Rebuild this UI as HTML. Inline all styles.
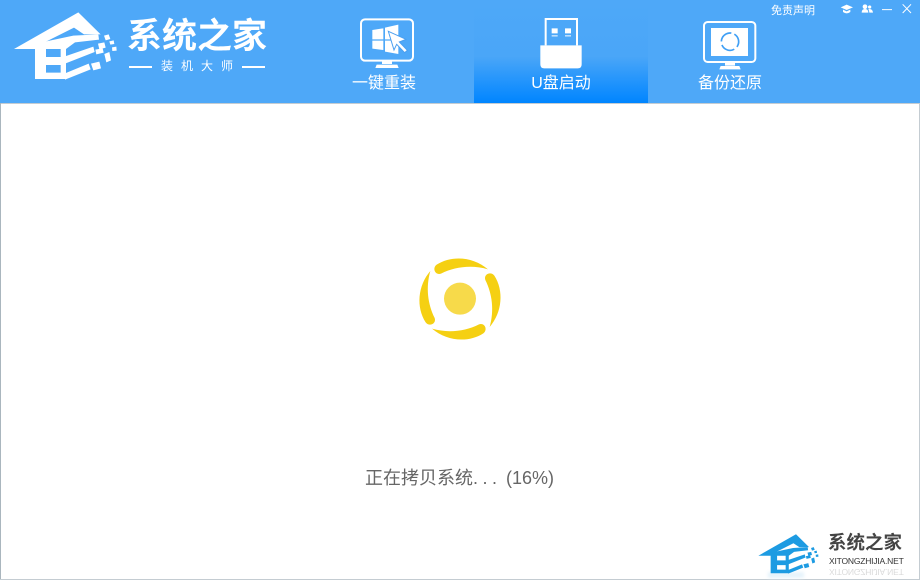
<!DOCTYPE html>
<html><head><meta charset="utf-8">
<style>
html,body{margin:0;padding:0;background:#fff}
#p{position:relative;width:920px;height:580px;overflow:hidden;background:#fff;font-family:"Liberation Sans","Noto Sans CJK SC",sans-serif}
.a{position:absolute;white-space:nowrap}
#hd{left:0;top:0;width:920px;height:103px;background:#4ea8f8}
#tab{left:474px;top:0;width:174px;height:103px;background:linear-gradient(#4ea8f8 0,#4aa6f8 55%,#0085ff 100%)}
.t{color:#fff;font-size:16px;line-height:20px;top:74px;text-align:center;width:174px}
svg{position:absolute;overflow:visible}
</style></head><body><div id="p">
<div class="a" id="hd"></div><div class="a" id="tab"></div>
<div class="a" style="left:0;top:103px;width:920px;height:1px;background:#c4ccd2"></div>
<div class="a" style="left:0;top:103px;width:1px;height:477px;background:#aab6be"></div>
<div class="a" style="right:0;top:103px;width:1px;height:477px;background:#c4ccd2"></div>
<div class="a" style="left:0;top:579px;width:920px;height:1px;background:#c4ccd2"></div>

<svg style="left:10px;top:5px" width="110" height="80" viewBox="0 0 330 240">
<g fill="#fff">
<path d="M12 132L205 22 272 88 222 88 192 68 108 110 105 132Z"/>
<path d="M75 125L105 110 190 92 265 88 267 104 195 112 168 132 168 222 75 222Z"/>
<path d="M165 154L250 125 254 141 165 176ZM165 205L236 176 242 193 165 224Z"/>
<path d="M282 92L296 88 301 102 287 106ZM298 109L311 106 313 117 301 119ZM306 127L319 125 320 137 307 138ZM264 116L283 112 287 128 268 133ZM256 134L278 130 281 143 259 148ZM283 147L298 141 303 166 289 172ZM243 176L268 170 273 190 250 196Z"/>
</g>
<path fill="#4ea8f8" d="M108 132H152V156H108ZM108 180H152V203H108Z"/>
</svg>
<div class="a" style="left:127px;top:13px;font-size:35px;line-height:48px;font-weight:700;color:#fff;letter-spacing:0">系统之家</div>
<div class="a" style="left:129px;top:66px;width:23px;height:2px;background:#fff"></div>
<div class="a" style="left:242px;top:66px;width:23px;height:2px;background:#fff"></div>
<div class="a" style="left:161px;top:58px;font-size:12px;line-height:17px;color:#fff;letter-spacing:8px">装机大师</div>

<svg style="left:330px;top:0" width="320" height="105" viewBox="0 0 960 315">
<rect x="93" y="58" width="156" height="124" rx="12" fill="none" stroke="#fff" stroke-width="6"/>
<path fill="#fff" d="M127 90L160 85V118H127ZM165 83L205 74V118H165ZM127 122H160V150L127 146ZM165 122H205V162L165 155ZM156 184H186V192H156ZM140 194H202L206 204H136Z"/>
<path fill="#fff" stroke="#4a9ff0" stroke-width="3" d="M175 94L228 118 208 126 232 151 224 158 200 133 192 150Z"/>
<path fill="none" stroke="#fff" stroke-width="6" d="M647 136V57H741V136"/>
<path fill="#fff" d="M631 136H755V193Q755 205 743 205H643Q631 205 631 193ZM665 85H683V100H665ZM705 85H723V100H705ZM665 106H683V109H665ZM705 106H723V109H705Z"/>
</svg>

<svg style="left:680px;top:10px" width="100" height="95" viewBox="0 0 300 285">
<rect x="72" y="36" width="154" height="120" rx="11" fill="none" stroke="#fff" stroke-width="6"/>
<path fill="#fff" d="M93 54H204V138H93ZM135 158H165V167H135ZM122 168H178L182 178H118Z"/>
<circle cx="150" cy="95" r="26" fill="none" stroke="#3f9ff5" stroke-width="5" stroke-dasharray="44 10.4" transform="rotate(-60 150 95)"/>
</svg>

<div class="a t" style="left:297px">一键重装</div>
<div class="a t" style="left:474px">U盘启动</div>
<div class="a t" style="left:643px">备份还原</div>

<div class="a" style="left:771px;top:4px;font-size:11px;line-height:14px;color:#fff">免责声明</div>
<svg style="left:750px;top:0" width="170" height="50" viewBox="0 0 510 150">
<path fill="#fff" d="M272 22L290 14 309 22 290 30ZM279 29L290 34 301 29V36Q290 44 279 36Z"/>
<path fill="#fff" d="M345 13a7 7 0 1 1-.1 0ZM335 38Q335 27 345 27 355 27 355 38ZM359 16a5 5 0 1 1-.1 0ZM358 27Q368 27 369 38H358Q358 31 355 28Z"/>
<path fill="none" stroke="#fff" stroke-width="3" d="M396 29H426M458 13L483 39M483 13L458 39"/>
</svg>

<svg style="left:410px;top:250px" width="100" height="100" viewBox="0 0 300 300">
<circle cx="150" cy="146" r="48" fill="#f7da4a"/>
<g fill="#f5d012">
<path d="M234 58C190 20 125 15 80 44C66 54 75 77 93 71C135 50 185 44 234 58Z"/>
<path d="M234 58C190 20 125 15 80 44C66 54 75 77 93 71C135 50 185 44 234 58Z" transform="rotate(90 150 147)"/>
<path d="M234 58C190 20 125 15 80 44C66 54 75 77 93 71C135 50 185 44 234 58Z" transform="rotate(180 150 147)"/>
<path d="M234 58C190 20 125 15 80 44C66 54 75 77 93 71C135 50 185 44 234 58Z" transform="rotate(270 150 147)"/>
</g>
</svg>

<div class="a" style="left:365px;top:466px;font-size:18px;line-height:25px;color:#666">正在拷贝系统</div>
<div class="a" style="left:473px;top:466px;font-size:18px;line-height:25px;color:#666;letter-spacing:4.5px">...</div>
<div class="a" style="left:506px;top:466px;font-size:18px;line-height:25px;color:#666">(16%)</div>

<div class="a" style="left:768px;top:572px;width:36px;height:6px;background:#e6f3fb;filter:blur(1.5px)"></div>
<svg style="left:755.7px;top:529.7px" width="64.4" height="46.8" viewBox="0 0 330 240">
<g fill="#1d9be2">
<path d="M12 132L205 22 272 88 222 88 192 68 108 110 105 132Z"/>
<path d="M75 125L105 110 190 92 265 88 267 104 195 112 168 132 168 222 75 222Z"/>
<path d="M165 154L250 125 254 141 165 176ZM165 205L236 176 242 193 165 224Z"/>
<path d="M282 92L296 88 301 102 287 106ZM298 109L311 106 313 117 301 119ZM306 127L319 125 320 137 307 138ZM264 116L283 112 287 128 268 133ZM256 134L278 130 281 143 259 148ZM283 147L298 141 303 166 289 172ZM243 176L268 170 273 190 250 196Z"/>
</g>
<path fill="#fff" d="M108 132H152V156H108ZM108 180H152V203H108Z"/>
</svg>
<div class="a" style="left:828px;top:530px;font-size:18.5px;line-height:26px;font-weight:700;color:#444">系统之家</div>
<div class="a" style="left:829px;top:555px;font-size:8.5px;line-height:12px;color:#333;letter-spacing:-.2px">XITONGZHIJIA.NET</div>
<div class="a" style="left:829px;top:566px;font-size:8.5px;line-height:12px;color:#333;letter-spacing:-.2px;opacity:.18;transform:scaleY(-1)">XITONGZHIJIA.NET</div>
</div></body></html>
